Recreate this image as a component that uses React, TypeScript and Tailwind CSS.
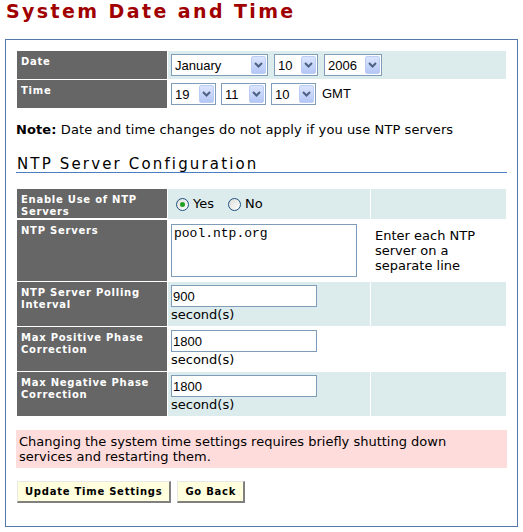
import React from "react";

const sans = { fontFamily: '"DejaVu Sans", Verdana, sans-serif' };

function Chevron() {
  return (
    <svg width="9" height="6" viewBox="0 0 9 6">
      <path d="M1 1 L4.5 4.5 L8 1" stroke="#4d6185" strokeWidth="2" fill="none" />
    </svg>
  );
}

function Select({ value, width }: { value: string; width: string }) {
  return (
    <div
      className={`flex h-[22px] items-center border border-[#7f9db9] bg-white pl-[3px] pr-px ${width}`}
    >
      <span className="flex-1 text-[13px] leading-none text-black [font-family:'Liberation_Sans',Arial,sans-serif]">
        {value}
      </span>
      <span className="flex h-[18px] w-[15px] items-center justify-center rounded-[2px] border border-[#bccdf6] bg-gradient-to-b from-[#dbe5fd] to-[#b4c7f5]">
        <Chevron />
      </span>
    </div>
  );
}

function Radio({ checked }: { checked?: boolean }) {
  return (
    <span className="flex h-[13px] w-[13px] items-center justify-center rounded-full border border-[#1c5180] bg-gradient-to-br from-[#dcdcd7] to-white">
      {checked && <span className="h-[5px] w-[5px] rounded-full bg-[#21a121]" />}
    </span>
  );
}

function Label({ children }: { children: React.ReactNode }) {
  return (
    <div className="bg-[#666666] px-[4px] pt-[5px] text-[10px] font-bold leading-[12px] tracking-[0.75px] text-white">
      {children}
    </div>
  );
}

function TextInput({ value }: { value: string }) {
  return (
    <input
      readOnly
      value={value}
      className="block h-[22px] w-[146px] border border-[#7f9db9] bg-white px-[1px] text-[13px] text-black outline-none [font-family:'Liberation_Sans',Arial,sans-serif]"
    />
  );
}

function Seconds({ value }: { value: string }) {
  return (
    <div className="pl-[3px] pt-[3px]">
      <TextInput value={value} />
      <div className="text-[13px] leading-[16px] text-black">second(s)</div>
    </div>
  );
}

const btn =
  "h-[22px] border-b-2 border-l border-r-2 border-t border-b-[#808080] border-l-[#e8e8e8] border-r-[#808080] border-t-[#e8e8e8] bg-[#ffffdd] px-[7px] text-[10px] font-bold tracking-[0.75px] text-black";

export default function App() {
  return (
    <div className="min-h-[532px] w-[523px] bg-white text-black" style={sans}>
      <h1 className="pl-[6px] text-[19px] font-bold leading-[23px] tracking-[2.4px] text-[#a00000]">
        System Date and Time
      </h1>
      <div className="ml-[5px] mt-[16px] w-[513px] border border-[#5577aa] px-[10px] pb-[23px] pt-[10px]">
        <div className="grid grid-cols-[150px_338px] gap-px p-px">
          <Label>Date</Label>
          <div className="flex h-[28px] items-center gap-[6px] bg-[#dcecec] pl-[3px]">
            <Select value="January" width="w-[97px]" />
            <Select value="10" width="w-[44px]" />
            <Select value="2006" width="w-[58px]" />
          </div>
          <Label>Time</Label>
          <div className="flex h-[28px] items-center gap-[5px] bg-white pl-[3px]">
            <Select value="19" width="w-[45px]" />
            <Select value="11" width="w-[45px]" />
            <Select value="10" width="w-[45px]" />
            <span className="ml-px text-[13px] [font-family:'Liberation_Sans',Arial,sans-serif]">GMT</span>
          </div>
        </div>

        <p className="mt-[13px] text-[13px] leading-[15px] tracking-[0.1px]">
          <b>Note:</b> Date and time changes do not apply if you use NTP servers
        </p>

        <h2 className="mt-[20px] border-b border-[#4a7fc4] pl-px text-[15px] leading-[15px] tracking-[2.15px]">
          NTP Server Configuration
        </h2>

        <div className="mt-[15px] grid grid-cols-[150px_202px_135px] gap-px p-px">
          <div className="h-[30px]">
            <Label>
              Enable Use of NTP
              <br />
              Servers
            </Label>
          </div>
          <div className="flex items-center bg-[#dcecec] pl-[8px] text-[13px]">
            <Radio checked />
            <span className="ml-[4px] mr-[14px]">Yes</span>
            <Radio />
            <span className="ml-[4px]">No</span>
          </div>
          <div className="bg-[#dcecec]" />

          <div className="h-[61px] bg-[#666666]">
            <Label>NTP Servers</Label>
          </div>
          <div className="flex items-center bg-white pl-[3px]">
            <textarea
              readOnly
              value="pool.ntp.org"
              className="block h-[53px] w-[186px] resize-none border border-[#7f9db9] bg-white px-[2px] py-[1px] text-[13px] leading-[15px] text-black outline-none [font-family:'Liberation_Mono','Courier_New',monospace]"
            />
          </div>
          <div className="flex items-center bg-white pl-[4px] text-[13px] leading-[15px]">
            <span>
              Enter each NTP
              <br />
              server on a
              <br />
              separate line
            </span>
          </div>

          <div className="h-[44px] bg-[#666666]">
            <Label>
              NTP Server Polling
              <br />
              Interval
            </Label>
          </div>
          <div className="bg-[#dcecec]">
            <Seconds value="900" />
          </div>
          <div className="bg-[#dcecec]" />

          <div className="h-[44px] bg-[#666666]">
            <Label>
              Max Positive Phase
              <br />
              Correction
            </Label>
          </div>
          <div className="bg-white">
            <Seconds value="1800" />
          </div>
          <div className="bg-white" />

          <div className="h-[44px] bg-[#666666]">
            <Label>
              Max Negative Phase
              <br />
              Correction
            </Label>
          </div>
          <div className="bg-[#dcecec]">
            <Seconds value="1800" />
          </div>
          <div className="bg-[#dcecec]" />
        </div>

        <div className="mt-[13px] bg-[#ffdcdc] px-[3px] py-[4px] text-[13px] leading-[15px]">
          Changing the system time settings requires briefly shutting down
          <br />
          services and restarting them.
        </div>

        <div className="mt-[13px] flex gap-[6px] pl-px">
          <button className={btn}>Update Time Settings</button>
          <button className={btn}>Go Back</button>
        </div>
      </div>
    </div>
  );
}
